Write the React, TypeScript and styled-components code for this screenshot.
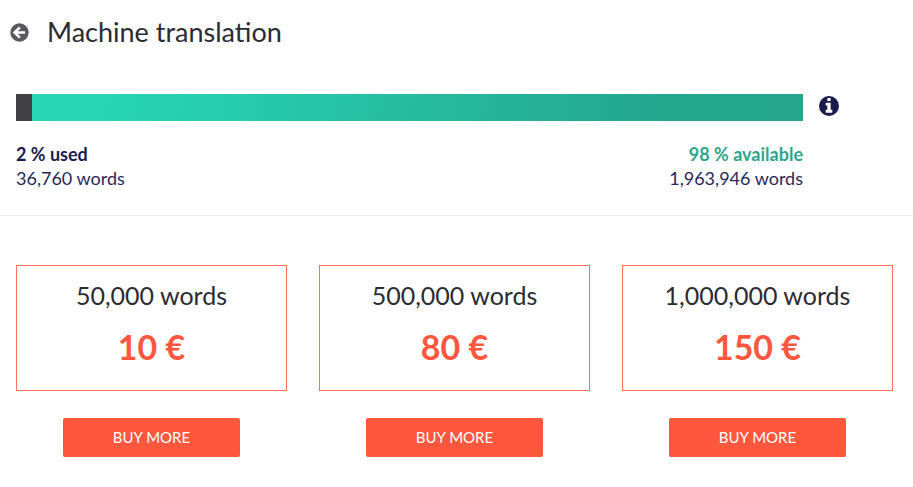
import React from "react";
import styled, { createGlobalStyle } from "styled-components";

const GlobalStyle = createGlobalStyle`
  *, *::before, *::after { box-sizing: border-box; }
  body { margin: 0; background: #fff; color: #2b2b33; font-family: Lato, sans-serif; }
  h1, h2, p { margin: 0; font-weight: 400; }
`;

const Header = styled.header`
  display: flex;
  align-items: center;
  gap: 18px;
  padding: 14px 10px 0;
`;

const IconButton = styled.button<{ $color: string }>`
  display: flex;
  align-self: center;
  padding: 0;
  border: 0;
  background: none;
  color: ${(p) => p.$color};
  cursor: pointer;
`;

const InfoButton = styled(IconButton)`
  align-self: start;
  padding-top: 2px;
`;

const Title = styled.h1`
  font-size: 27px;
  line-height: 36px;
`;

const Usage = styled.section`
  display: grid;
  grid-template-columns: 1fr 20px;
  column-gap: 16px;
  row-gap: 21px;
  padding: 44px 74px 25px 16px;
  border-bottom: 1px solid #ececec;
`;

const Bar = styled.div`
  display: flex;
  height: 27px;
  background: linear-gradient(100deg, #27d6b7 0%, #27d2b4 18%, #24a68f 82%, #25a58e 100%);
`;

const Used = styled.div`
  background: #414143;
`;

const Stats = styled.div`
  display: flex;
  justify-content: space-between;
  font-size: 18px;
  line-height: 24px;
  color: #29285a;
`;

const Stat = styled.p<{ $end?: boolean }>`
  display: flex;
  flex-direction: column;
  text-align: ${(p) => (p.$end ? "right" : "left")};
`;

const Share = styled.strong<{ $color: string }>`
  color: ${(p) => p.$color};
`;

const Plans = styled.section`
  display: grid;
  grid-template-columns: repeat(3, 1fr);
  gap: 32px;
  padding: 49px 20px 30px 16px;
`;

const Plan = styled.article`
  display: flex;
  flex-direction: column;
  align-items: center;
  gap: 27px;
`;

const Offer = styled.div`
  width: 100%;
  padding: 10px 0 19px;
  border: 1px solid #ff7059;
  text-align: center;
`;

const Words = styled.h2`
  font-size: 25px;
  line-height: 38px;
`;

const Price = styled.p`
  margin-top: 9px;
  font-size: 34px;
  line-height: 48px;
  font-weight: 700;
  color: #ff573d;
`;

const BuyButton = styled.button`
  width: 65%;
  height: 39px;
  padding: 0 0 2px;
  border: 0;
  border-radius: 2px;
  background: #ff573d;
  color: #fff;
  font-family: inherit;
  font-size: 15px;
  cursor: pointer;
`;

const BackIcon = () => (
  <svg width="19" height="19" viewBox="0 0 19 19" aria-hidden="true">
    <circle cx="9.500" cy="9.500" r="9.200" fill="currentColor" />
    <path d="M9.800 4.300 4.600 9.500l5.200 5.200M5.200 9.500H15" fill="none" stroke="#fff" strokeWidth="2.600" />
  </svg>
);

const InfoIcon = () => (
  <svg width="20" height="20" viewBox="0 128 1536 1536" aria-hidden="true">
    <circle cx="768" cy="896" r="768" fill="currentColor" />
    <path
      fill="#fff"
      d="M1024 1376v-160q0-14-9-23t-23-9h-96V672q0-14-9-23t-23-9H544q-14 0-23 9t-9 23v160q0 14 9 23t23 9h96v320h-96q-14 0-23 9t-9 23v160q0 14 9 23t23 9h448q14 0 23-9t9-23zM896 480V320q0-14-9-23t-23-9H672q-14 0-23 9t-9 23v160q0 14 9 23t23 9h192q14 0 23-9t9-23z"
    />
  </svg>
);

const plans = [
  { words: "50,000 words", price: "10 €" },
  { words: "500,000 words", price: "80 €" },
  { words: "1,000,000 words", price: "150 €" },
];

export default function App() {
  const used = 2;
  return (
    <>
      <GlobalStyle />
      <Header>
        <IconButton $color="#5a5a5e" aria-label="Back"><BackIcon /></IconButton>
        <Title>Machine translation</Title>
      </Header>
      <main>
        <Usage>
          <Bar role="progressbar" aria-label="Words used" aria-valuenow={used} aria-valuemin={0} aria-valuemax={100}>
            <Used style={{ width: `${used}%` }} />
          </Bar>
          <InfoButton $color="#1b1a4b" aria-label="Information"><InfoIcon /></InfoButton>
          <Stats>
            <Stat><Share $color="#1b1a4b">2 % used</Share><span>36,760 words</span></Stat>
            <Stat $end><Share $color="#2fa58e">98 % available</Share><span>1,963,946 words</span></Stat>
          </Stats>
        </Usage>
        <Plans>
          {plans.map((plan) => (
            <Plan key={plan.words}>
              <Offer>
                <Words>{plan.words}</Words>
                <Price>{plan.price}</Price>
              </Offer>
              <BuyButton>BUY MORE</BuyButton>
            </Plan>
          ))}
        </Plans>
      </main>
    </>
  );
}
